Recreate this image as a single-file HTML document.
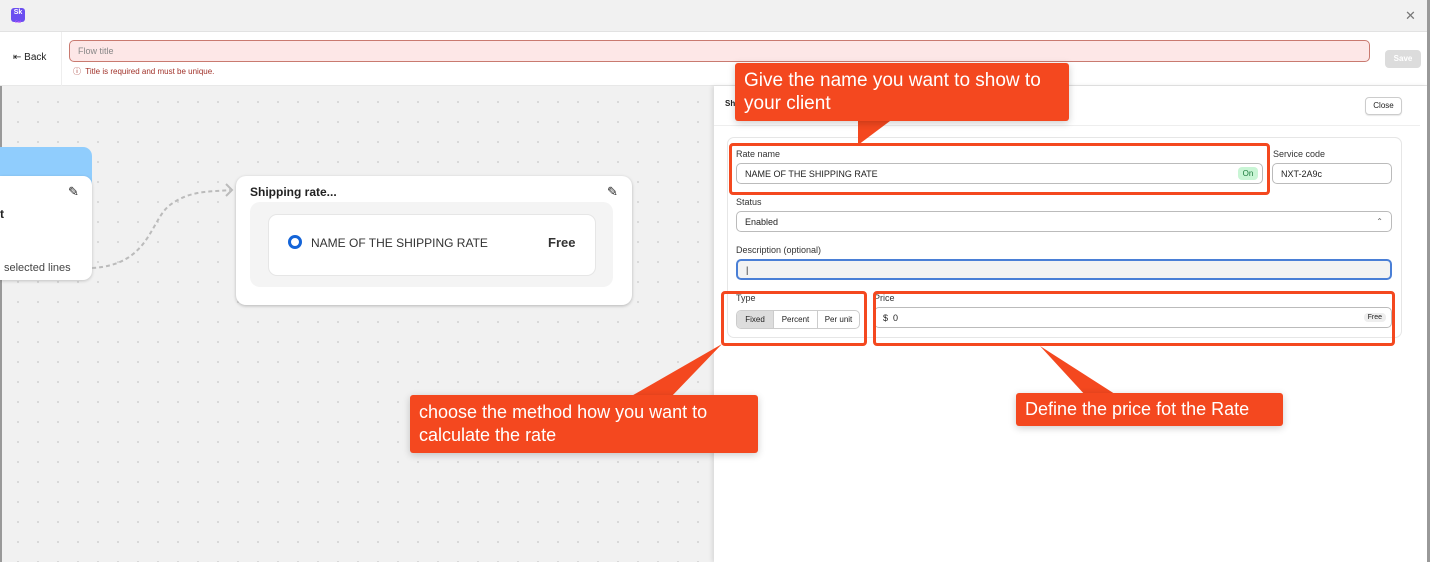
<!DOCTYPE html><html><head><style>
*{box-sizing:border-box;margin:0;padding:0}
body{width:1430px;height:562px;overflow:hidden;font-family:"Liberation Sans",sans-serif;background:#f1f1f1;position:relative;color:#222}
.a{position:absolute}
.canvas{left:0;top:86px;width:714px;height:476px;background-color:#f1f1f1;background-image:radial-gradient(#d2d2d2 0.8px,transparent 1.1px);background-size:20px 20px;background-position:8px 6px}
.lbl{font-size:9px;color:#333}
.inp{background:#fff;border:1px solid #bbb;border-radius:5px;font-size:9px;color:#222;padding-left:8px;display:flex;align-items:center}
.red{border:3px solid #f4481f;border-radius:4px}
.call{background:#f4481f;color:#fff;border-radius:3px;font-size:19px;line-height:23px;padding:6px 9px;box-shadow:0 2px 8px rgba(0,0,0,.2)}
</style></head><body>
<div class="a" style="left:0;top:0;width:1430px;height:32px;background:#f1f1f1;border-bottom:1px solid #e2e2e2"></div>
<div class="a" style="left:11px;top:8px;width:14px;height:14px;background:#6b4ef0;border-radius:3px;color:#fff;font-size:7px;font-weight:bold;text-align:center;line-height:9px">Sk<br><span style="font-size:4px;color:#b5f">Cal</span></div>
<div class="a" style="left:1405px;top:8px;font-size:13px;color:#777">✕</div>
<div class="a" style="left:0;top:32px;width:1430px;height:54px;background:#fff;border-bottom:1px solid #e8e8e8"></div>
<div class="a" style="left:61px;top:32px;width:1px;height:54px;background:#eee"></div>
<div class="a" style="left:13px;top:52px;font-size:10px;color:#222">⇤ Back</div>
<div class="a" style="left:69px;top:40px;width:1301px;height:22px;background:#fde7e7;border:1px solid #c97a70;border-radius:5px;font-size:9px;color:#888;padding:5px 8px">Flow title</div>
<div class="a" style="left:73px;top:66px;font-size:8px;color:#a1322a">ⓘ&nbsp; Title is required and must be unique.</div>
<div class="a" style="left:1385px;top:50px;width:36px;height:18px;background:#dcdcdc;border-radius:4px;font-size:8px;color:#fff;text-align:center;line-height:18px;font-weight:bold">Save</div>
<div class="a canvas"></div>
<div class="a" style="left:0;top:86px;width:2px;height:476px;background:#999"></div>
<div class="a" style="left:0;top:147px;width:92px;height:40px;background:#90cdfd;border-radius:0 9px 0 0"></div>
<div class="a" style="left:0;top:176px;width:92px;height:104px;background:#fff;border-radius:0 9px 9px 0;box-shadow:0 1px 3px rgba(0,0,0,.2)"></div>
<div class="a" style="left:0;top:207px;font-size:12px;font-weight:bold">t</div>
<div class="a" style="left:4px;top:262px;font-size:11px;color:#444">selected lines</div>
<div class="a" style="left:68px;top:184px;font-size:13px">✎</div>
<svg class="a" style="left:90px;top:180px" width="150" height="95"><path d="M2 88 C60 85 60 40 80 25 C100 10 120 12 140 10" fill="none" stroke="#bbb" stroke-width="2" stroke-dasharray="4 3"/><path d="M136 4 L142 10 L136 16" fill="none" stroke="#bbb" stroke-width="2"/></svg>
<div class="a" style="left:236px;top:176px;width:396px;height:129px;background:#fff;border-radius:10px;box-shadow:0 1px 3px rgba(0,0,0,.25)"></div>
<div class="a" style="left:250px;top:185px;font-size:12px;font-weight:bold">Shipping rate...</div>
<div class="a" style="left:607px;top:184px;font-size:13px">✎</div>
<div class="a" style="left:250px;top:202px;width:363px;height:85px;background:#f4f4f4;border-radius:10px"></div>
<div class="a" style="left:268px;top:214px;width:328px;height:62px;background:#fff;border:1px solid #e6e6e6;border-radius:9px"></div>
<div class="a" style="left:288px;top:235px;width:14px;height:14px;border:3.5px solid #1464d8;border-radius:50%"></div>
<div class="a" style="left:311px;top:236px;font-size:12px;color:#333">NAME OF THE SHIPPING RATE</div>
<div class="a" style="left:548px;top:235px;font-size:13px;font-weight:bold;color:#333">Free</div>
<div class="a" style="left:714px;top:86px;width:714px;height:476px;background:#fff;box-shadow:-2px 0 4px rgba(0,0,0,.1)"></div>
<div class="a" style="left:1427px;top:0;width:3px;height:562px;background:#999"></div>
<div class="a" style="left:725px;top:99px;font-size:8px;font-weight:bold">Sh</div>
<div class="a" style="left:1365px;top:97px;width:37px;height:18px;border:1px solid #ccc;border-radius:4px;font-size:8px;text-align:center;line-height:16px;box-shadow:0 1px 1px rgba(0,0,0,.1)">Close</div>
<div class="a" style="left:714px;top:125px;width:706px;height:1px;background:#eee"></div>
<div class="a" style="left:727px;top:137px;width:675px;height:201px;border:1px solid #e6e6e6;border-radius:7px"></div>
<div class="a lbl" style="left:736px;top:149px">Rate name</div>
<div class="a inp" style="left:736px;top:163px;width:527px;height:21px">NAME OF THE SHIPPING RATE</div>
<div class="a" style="left:1238px;top:167px;width:20px;height:13px;background:#c9f5d5;border-radius:4px;font-size:8px;color:#1a7a3a;text-align:center;line-height:13px">On</div>
<div class="a lbl" style="left:1273px;top:149px">Service code</div>
<div class="a inp" style="left:1272px;top:163px;width:120px;height:21px">NXT-2A9c</div>
<div class="a lbl" style="left:736px;top:197px">Status</div>
<div class="a inp" style="left:736px;top:211px;width:656px;height:21px">Enabled<span style="position:absolute;right:8px;font-size:8px;color:#666">⌃</span></div>
<div class="a lbl" style="left:736px;top:245px">Description (optional)</div>
<div class="a inp" style="left:736px;top:259px;width:656px;height:21px;background:#f3f3f3;border:2px solid #4a7fd6">|</div>
<div class="a lbl" style="left:736px;top:293px">Type</div>
<div class="a" style="left:736px;top:310px;width:124px;height:19px;border:1px solid #ccc;border-radius:5px;display:flex;font-size:8px;overflow:hidden">
<div style="width:36px;background:#ddd;text-align:center;line-height:17px">Fixed</div><div style="width:44px;border-left:1px solid #ccc;text-align:center;line-height:17px">Percent</div><div style="flex:1;border-left:1px solid #ccc;text-align:center;line-height:17px">Per unit</div></div>
<div class="a lbl" style="left:874px;top:293px">Price</div>
<div class="a inp" style="left:874px;top:307px;width:518px;height:21px">$&nbsp; 0<span style="position:absolute;right:5px;background:#eee;border-radius:4px;padding:1px 4px;font-size:7px">Free</span></div>
<div class="a red" style="left:729px;top:143px;width:541px;height:52px"></div>
<div class="a red" style="left:721px;top:291px;width:146px;height:55px"></div>
<div class="a red" style="left:873px;top:291px;width:522px;height:55px"></div>
<svg class="a" style="left:0;top:0" width="1430" height="562"><polygon points="858,118 894,118 858,145" fill="#f4481f"/><polygon points="628,398 670,398 722,344" fill="#f4481f"/><polygon points="1086,396 1118,396 1040,346" fill="#f4481f"/></svg>
<div class="a call" style="left:735px;top:63px;width:334px;height:58px">Give the name you want to show to your client</div>
<div class="a call" style="left:410px;top:395px;width:348px;height:58px;font-size:18px">choose the method how you want to calculate the rate</div>
<div class="a call" style="left:1016px;top:393px;width:267px;height:33px;font-size:18px;line-height:21px">Define the price fot the Rate</div>
</body></html>
